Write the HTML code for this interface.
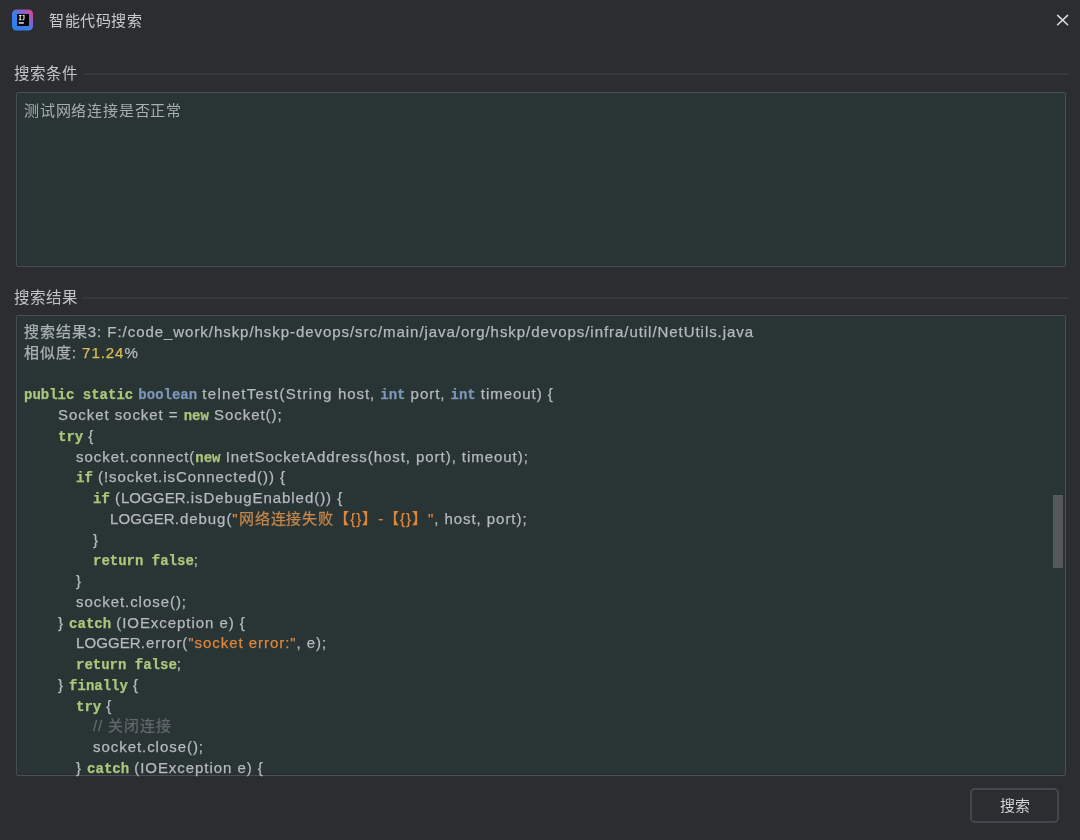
<!DOCTYPE html>
<html lang="zh-CN">
<head>
<meta charset="utf-8">
<style>
html,body{margin:0;padding:0;}
.abs{will-change:transform;}
body{width:1080px;height:840px;background:#2b2d30;position:relative;overflow:hidden;font-family:"Liberation Sans",sans-serif;color:#c9cbcf;}
.abs{position:absolute;}
#title{left:49px;top:10.5px;font-size:15px;letter-spacing:0.5px;line-height:20px;color:#c9cacd;white-space:nowrap;}
.label{font-size:15.5px;line-height:20px;color:#c2c4c7;white-space:nowrap;}
.sep{height:2px;background:#35373b;}
.box{background:#293435;border:1px solid #4b4f55;box-shadow:inset 1px 0 0 #262f32, inset 0 -1px 0 #262f32;border-radius:2px;box-sizing:border-box;}
#query{left:24px;top:100.5px;font-size:15px;letter-spacing:0.8px;line-height:20px;color:#a9adb0;white-space:nowrap;}
#code{left:24px;top:322px;font-size:15px;line-height:20.75px;color:#b6b9bd;letter-spacing:0.95px;-webkit-text-stroke:0.25px currentColor;}
#code div{height:20.75px;white-space:pre;}
.k{font-family:"Liberation Mono",monospace;font-weight:bold;color:#aac77c;font-size:14px;letter-spacing:0;}
.t{font-family:"Liberation Mono",monospace;font-weight:bold;color:#7b96b8;font-size:14px;letter-spacing:0;}
.s{color:#de873d;}
.n{color:#d9bd58;}
.c{color:#63676b;}
.u{letter-spacing:0.1px;}
.z{color:#aeb1b4;}
#btn{left:970px;top:788px;width:89px;height:35px;border:2px solid #45474c;border-radius:5px;box-sizing:border-box;font-size:15px;line-height:31px;text-align:center;color:#d0d1d4;}
</style>
</head>
<body>
<!-- icon -->
<svg class="abs" style="left:11px;top:8px" width="24" height="24" viewBox="0 0 24 24">
  <defs>
    <linearGradient id="g1" x1="0" y1="1" x2="1" y2="0">
      <stop offset="0" stop-color="#2b7ff2"/>
      <stop offset="0.45" stop-color="#3d7ee8"/>
      <stop offset="0.7" stop-color="#8a62c8"/>
      <stop offset="1" stop-color="#f0407a"/>
    </linearGradient>
  </defs>
  <rect x="1" y="1.5" width="21" height="21" rx="4.5" fill="url(#g1)"/>
  <rect x="6" y="6" width="12" height="12" fill="#05050a"/>
  <path d="M8 7.5 H10.4 M9.2 7.5 V11.8 M8 11.8 H10.4" stroke="#f2f2f2" stroke-width="1.1" fill="none"/>
  <path d="M11.6 7.5 H13.6 M13 7.5 V10.6 Q13 12 11.4 11.9" stroke="#e8e8e8" stroke-width="1.1" fill="none"/>
  <rect x="7.8" y="14.2" width="5" height="1.5" fill="#e6e6e6"/>
</svg>
<div id="title" class="abs">智能代码搜索</div>
<!-- close -->
<svg class="abs" style="left:1055px;top:13px" width="16" height="16" viewBox="0 0 16 16">
  <path d="M2.6 2.4 L12.6 11.8 M12.6 2.4 L2.6 11.8" stroke="#dcdde0" stroke-width="1.5" stroke-linecap="round" fill="none"/>
</svg>

<div class="abs label" style="left:14px;top:64px">搜索条件</div>
<div class="abs sep" style="left:84px;top:73px;width:985px"></div>
<div class="abs box" style="left:16px;top:92px;width:1050px;height:175px"></div>
<div id="query" class="abs">测试网络连接是否正常</div>

<div class="abs label" style="left:14px;top:288px">搜索结果</div>
<div class="abs sep" style="left:82px;top:297px;width:987px"></div>
<div class="abs box" style="left:16px;top:315px;width:1050px;height:461px"></div>
<!-- scrollbar -->
<div class="abs" style="left:1053px;top:495px;width:10px;height:73px;background:#55595c;"></div>

<div id="code" class="abs">
<div><span class="z">搜索结果</span>3: F:/code_work/hskp/hskp-devops/src/main/java/org/hskp/devops/infra/util/NetUtils.java</div>
<div><span class="z">相似度</span>: <span class="n">71.24</span>%</div>
<div></div>
<div><span class="k">public static</span> <span class="t">boolean</span> <span style="letter-spacing:1.3px">telnetTest(String</span> host, <span class="t">int</span> port, <span class="t">int</span> timeout) {</div>
<div style="padding-left:34px"><span>Socket socket = </span><span class="k">new</span> Socket();</div>
<div style="padding-left:34px"><span class="k">try</span> {</div>
<div style="padding-left:52px">socket.connect(<span class="k">new</span> InetSocketAddress(host, port), timeout);</div>
<div style="padding-left:52px"><span class="k">if</span> (!socket.isConnected()) {</div>
<div style="padding-left:69px"><span class="k">if</span> (<span class="u">LOGGER</span>.isDebugEnabled()) {</div>
<div style="padding-left:86px"><span class="u">LOGGER</span>.debug(<span class="s">"<span style="color:#c4874b">网络连接失败</span>【{}】-【{}】"</span>, host, port);</div>
<div style="padding-left:69px">}</div>
<div style="padding-left:69px"><span class="k">return false</span>;</div>
<div style="padding-left:52px">}</div>
<div style="padding-left:52px">socket.close();</div>
<div style="padding-left:34px">} <span class="k">catch</span> (IOException e) {</div>
<div style="padding-left:52px"><span class="u">LOGGER</span>.error(<span class="s">"socket error:"</span>, e);</div>
<div style="padding-left:52px"><span class="k">return false</span>;</div>
<div style="padding-left:34px">} <span class="k">finally</span> {</div>
<div style="padding-left:52px"><span class="k">try</span> {</div>
<div style="padding-left:69px"><span class="c">// 关闭连接</span></div>
<div style="padding-left:69px">socket.close();</div>
<div style="padding-left:52px">} <span class="k">catch</span> (IOException e) {</div>
</div>

<div id="btn" class="abs">搜索</div>
</body>
</html>
